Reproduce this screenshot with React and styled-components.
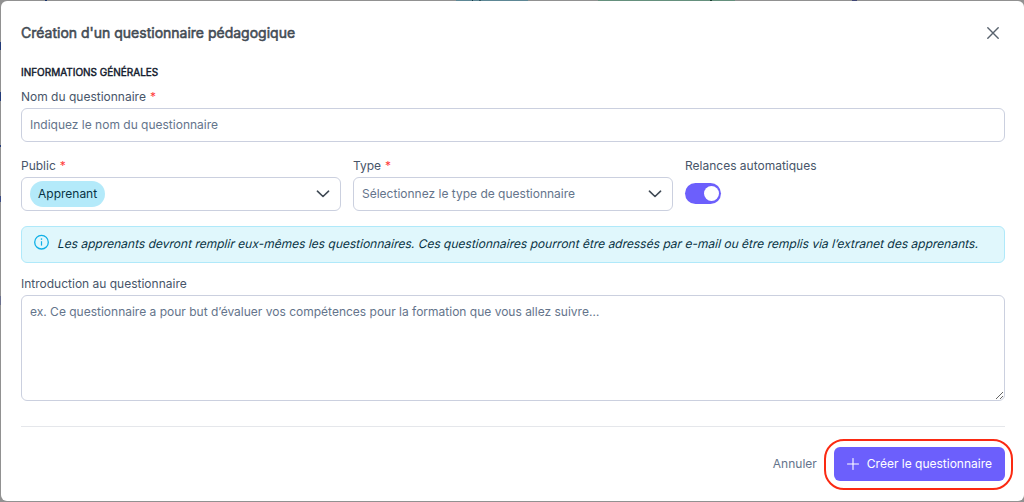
import React, { useState } from "react";
import styled, { createGlobalStyle } from "styled-components";

const GlobalStyle = createGlobalStyle`
  * {
    box-sizing: border-box;
  }
  body {
    margin: 0;
    overflow: hidden;
    font-family: Inter, sans-serif;
    font-size: 12px;
    color: #475569;
  }
  button, input, textarea {
    font: inherit;
  }
`;

// what is left of the page behind the overlay
const Backdrop = styled.div`
  height: 502px;
  padding: 1px 0 1px 1px;
  background:
    linear-gradient(#18336d, #18336d) 45px 0 / 2px 1px no-repeat,
    linear-gradient(#143845, #143845) 472px 0 / 1px 1px no-repeat,
    linear-gradient(#2f5864, #2f5864) 479px 0 / 2px 1px no-repeat,
    linear-gradient(#5d8795, #5d8795) 456px 0 / 72px 1px no-repeat,
    linear-gradient(#183f30, #183f30) 710px 0 / 2px 1px no-repeat,
    linear-gradient(#65907d, #65907d) 598px 0 / 137px 1px no-repeat,
    linear-gradient(#414775, #414775) 852px 0 / 5px 1px no-repeat,
    linear-gradient(#233b79, #233b79) 0 42px / 1px 8px no-repeat,
    linear-gradient(#233b79, #233b79) 0 92px / 1px 9px no-repeat,
    linear-gradient(#233b79, #233b79) 0 145px / 1px 2px no-repeat,
    linear-gradient(#3b4b83, #3b4b83) 0 196px / 1px 6px no-repeat,
    linear-gradient(#6a6f8d, #6a6f8d) 0 296px / 1px 9px no-repeat,
    #919191;
`;

const Dialog = styled.div`
  height: 500px;
  padding: 0 19px 0 20px;
  display: flex;
  flex-direction: column;
  background: #fff;
  border-radius: 6px;
`;

const Header = styled.div`
  display: flex;
  align-items: center;
  justify-content: space-between;
  height: 64px;
`;

const Title = styled.h1`
  margin: 0;
  padding-bottom: 2px;
  font-size: 14px;
  font-weight: 400;
  -webkit-text-stroke: 0.55px currentColor;
  color: #434b54;
`;

const CloseButton = styled.button`
  display: flex;
  padding: 6px;
  border: 0;
  background: none;
  color: #59636e;
`;

const SectionTitle = styled.h2`
  margin: 0 0 9px;
  font-size: 10px;
  line-height: 15px;
  font-weight: 400;
  -webkit-text-stroke: 0.4px currentColor;
  color: #0f172a;
  text-transform: uppercase;
`;

const Field = styled.div`
  display: flex;
  flex-direction: column;
  align-items: flex-start;
  width: ${({ $width }) => $width || "100%"};
`;

const Label = styled.label`
  height: 19px;
  line-height: 16px;
  color: #475569;
`;

const Required = styled.span`
  margin-left: 4px;
  color: #ff3b3b;
`;

const Input = styled.input`
  width: 100%;
  height: 34px;
  padding: 0 8px 2px;
  border: 1px solid #cbd0df;
  border-radius: 6px;
  outline: none;
  color: #475569;
  &::placeholder {
    color: #64748b;
  }
`;

const Row = styled.div`
  display: flex;
  gap: 12px;
  margin-top: 16px;
`;

const Select = styled.div`
  display: flex;
  align-items: center;
  justify-content: space-between;
  width: 100%;
  height: 34px;
  padding: 0 10px 0 8px;
  border: 1px solid #cbd0df;
  border-radius: 6px;
`;

const Placeholder = styled.span`
  padding-bottom: 2px;
  color: #64748b;
`;

const Chip = styled.span`
  height: 26px;
  padding: 0 8px;
  line-height: 26px;
  border-radius: 13px;
  background: #b4eafa;
  color: #083344;
`;

const Switch = styled.button`
  display: flex;
  justify-content: ${({ $on }) => ($on ? "flex-end" : "flex-start")};
  width: 36px;
  height: 21px;
  margin-top: 6px;
  padding: 3px 2px;
  border: 0;
  border-radius: 11px;
  background: ${({ $on }) => ($on ? "#6c5ffc" : "#cbd5e1")};
`;

const Knob = styled.span`
  width: 15px;
  height: 15px;
  border-radius: 50%;
  background: #fff;
`;

const Message = styled.div`
  display: flex;
  align-items: flex-start;
  gap: 8px;
  height: 37px;
  margin: 15px 0 13px;
  padding: 7px 12px;
  border: 1px solid #b0e9fa;
  border-radius: 6px;
  background: #e0f7fc;
  color: #083344;
  svg {
    flex-shrink: 0;
  }
`;

// slanted roman, not the italic face
const MessageText = styled.span`
  line-height: 20px;
  white-space: nowrap;
  transform: skewX(-14deg);
`;

const TextArea = styled.textarea`
  display: block;
  width: 100%;
  height: 106px;
  padding: 8px;
  line-height: 16px;
  border: 1px solid #cbd0df;
  border-radius: 6px;
  outline: none;
  resize: vertical;
  &::placeholder {
    color: #64748b;
  }
`;

const Footer = styled.div`
  display: flex;
  align-items: center;
  justify-content: flex-end;
  gap: 17px;
  height: 75px;
  margin-top: 25px;
  border-top: 1px solid #e5e7eb;
`;

const CancelButton = styled.button`
  padding: 0 0 2px;
  border: 0;
  background: none;
  color: #64748b;
`;

const SubmitButton = styled.button`
  display: flex;
  align-items: center;
  gap: 8px;
  height: 34px;
  padding: 0 13px;
  border: 0;
  border-radius: 6px;
  background: #6c5ffc;
  color: #fff;
`;

const ButtonLabel = styled.span`
  padding-bottom: 2px;
`;

const Highlight = styled.div`
  position: relative;
  &::after {
    content: "";
    position: absolute;
    inset: -8px -8px -9px -10px;
    border: 2px solid #fb2a12;
    border-radius: 20px;
    pointer-events: none;
  }
`;

const Chevron = () => (
  <svg width="14" height="14" viewBox="0 0 14 14" fill="none">
    <path
      d="M1.4 4.2 7 9.5l5.6-5.3"
      stroke="#3f4954"
      strokeWidth="1.6"
      strokeLinecap="round"
      strokeLinejoin="round"
    />
  </svg>
);

const CloseIcon = () => (
  <svg width="12" height="12" viewBox="0 0 12 12" fill="none">
    <path
      d="m.8.8 10.4 10.4M11.2.8.8 11.2"
      stroke="currentColor"
      strokeWidth="1.4"
      strokeLinecap="round"
    />
  </svg>
);

const InfoIcon = () => (
  <svg width="16" height="16" viewBox="0 0 16 16" fill="none">
    <circle cx="7.5" cy="8.2" r="6.8" stroke="#0eb0e6" strokeWidth="1.3" />
    <path d="M7.5 7.2v4.4" stroke="#0eb0e6" strokeWidth="1.2" />
    <circle cx="7.5" cy="5.1" r=".8" fill="#0eb0e6" />
  </svg>
);

const PlusIcon = () => (
  <svg width="12" height="12" viewBox="0 0 12 12" fill="none">
    <path
      d="M6 .5v11M.5 6h11"
      stroke="currentColor"
      strokeWidth="1.1"
      strokeLinecap="round"
    />
  </svg>
);

const App = () => {
  const [name, setName] = useState("");
  const [intro, setIntro] = useState("");
  const [reminders, setReminders] = useState(true);

  return (
    <>
      <GlobalStyle />
      <Backdrop>
        <Dialog>
          <Header>
            <Title>Création d'un questionnaire pédagogique</Title>
            <CloseButton>
              <CloseIcon />
            </CloseButton>
          </Header>
          <SectionTitle>Informations générales</SectionTitle>
          <Field>
            <Label>
              Nom du questionnaire<Required>*</Required>
            </Label>
            <Input
              value={name}
              onChange={({ target }) => setName(target.value)}
              placeholder="Indiquez le nom du questionnaire"
            />
          </Field>
          <Row>
            <Field $width="320px">
              <Label>
                Public<Required>*</Required>
              </Label>
              <Select>
                <Chip>Apprenant</Chip>
                <Chevron />
              </Select>
            </Field>
            <Field $width="320px">
              <Label>
                Type<Required>*</Required>
              </Label>
              <Select>
                <Placeholder>Sélectionnez le type de questionnaire</Placeholder>
                <Chevron />
              </Select>
            </Field>
            <Field $width="320px">
              <Label>Relances automatiques</Label>
              <Switch $on={reminders} onClick={() => setReminders(!reminders)}>
                <Knob />
              </Switch>
            </Field>
          </Row>
          <Message>
            <InfoIcon />
            <MessageText>
              Les apprenants devront remplir eux-mêmes les questionnaires. Ces
              questionnaires pourront être adressés par e-mail ou être remplis
              via l’extranet des apprenants.
            </MessageText>
          </Message>
          <Field>
            <Label>Introduction au questionnaire</Label>
            <TextArea
              value={intro}
              onChange={({ target }) => setIntro(target.value)}
              placeholder="ex. Ce questionnaire a pour but d’évaluer vos compétences pour la formation que vous allez suivre…"
            />
          </Field>
          <Footer>
            <CancelButton>Annuler</CancelButton>
            <Highlight>
              <SubmitButton>
                <PlusIcon />
                <ButtonLabel>Créer le questionnaire</ButtonLabel>
              </SubmitButton>
            </Highlight>
          </Footer>
        </Dialog>
      </Backdrop>
    </>
  );
};

export default App;
